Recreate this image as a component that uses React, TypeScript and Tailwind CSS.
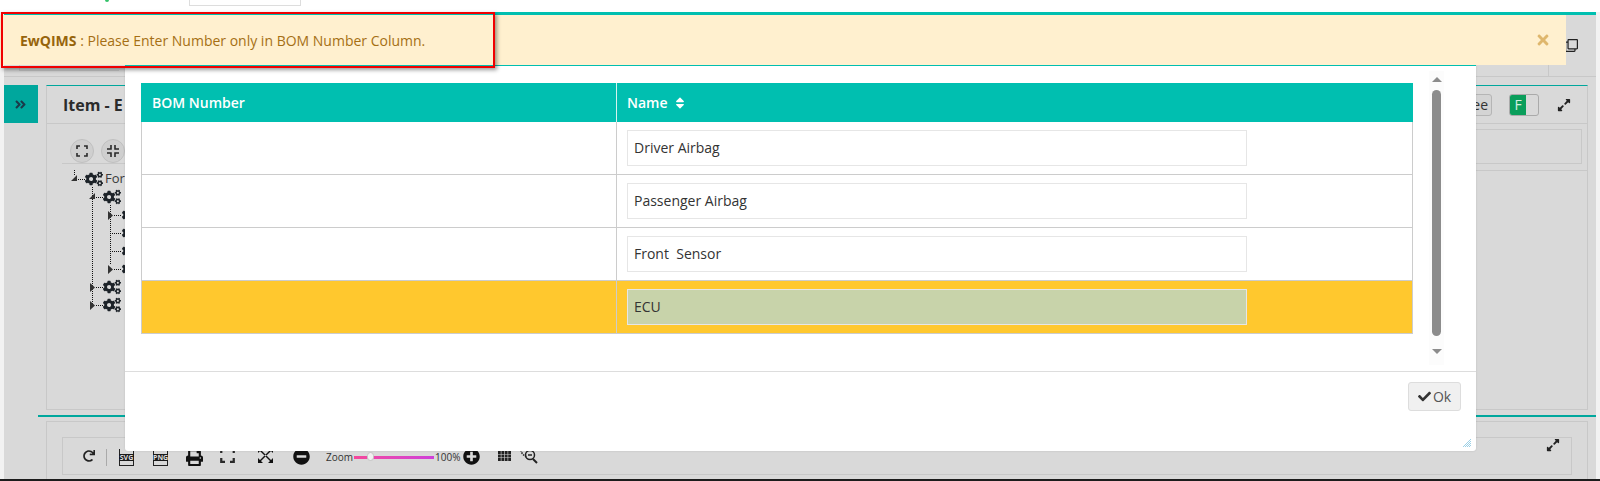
import { FaCheck, FaCogs, FaExpandAlt, FaPrint, FaSort, FaTimes, FaRedo, FaMinusCircle, FaPlusCircle, FaAngleDoubleRight, FaRegClone } from "react-icons/fa";

const rows = [
  { name: "Driver Airbag" },
  { name: "Passenger Airbag" },
  { name: "Front  Sensor" },
  { name: "ECU", active: true },
];

// tree rows: indent is the gear's left edge inside the tree box
const treeRows = [
  { indent: 85, label: "For" },
  { indent: 103 },
  { indent: 122 },
  { indent: 122 },
  { indent: 122 },
  { indent: 122 },
  { indent: 103 },
  { indent: 103 },
];

function CornerIcon({ size = 12, width = 1.6 }: { size?: number; width?: number }) {
  return (
    <svg width={size} height={size} viewBox="0 0 12 12" fill="none" stroke="#2a2a2a" strokeWidth={width}>
      <path d="M1 4V1h3M8 1h3v3M11 8v3H8M4 11H1V8" />
    </svg>
  );
}

function CollapseIcon() {
  return (
    <svg width="12" height="12" viewBox="0 0 12 12" fill="none" stroke="#2a2a2a" strokeWidth="1.6">
      <path d="M4 0v4H0M8 0v4h4M12 8H8v4M0 8h4v4" />
    </svg>
  );
}

function CrossArrows() {
  return (
    <svg width="15" height="15" viewBox="0 0 15 15" fill="#111" stroke="none">
      <path d="M2 1l12 12-1 1L1 2zM13 1L1 13l1 1L14 2z" />
      <path d="M0 0h5L0 5zM15 0v5l-5-5zM0 15v-5l5 5zM15 15h-5l5-5z" />
    </svg>
  );
}

function GridIcon() {
  return (
    <svg width="13" height="10" viewBox="0 0 13 10" fill="#222">
      {[0, 3.5, 7].map((y) =>
        [0, 3.4, 6.8, 10.2].map((x) => <rect key={`${x}-${y}`} x={x} y={y} width="2.8" height="3" />),
      )}
    </svg>
  );
}

function SearchLinkIcon() {
  return (
    <svg width="18" height="15" viewBox="0 0 18 15" fill="none" stroke="#222">
      <path d="M1 1c0 3 3 6 6 7" strokeWidth="1.5" strokeDasharray="1.500 1" />
      <circle cx="10" cy="6" r="4.500" strokeWidth="1.500" />
      <path d="M8 6h4" strokeWidth="1.500" />
      <path d="M13 10l4 4" strokeWidth="2" />
    </svg>
  );
}

function FileBadge({ label }: { label: string }) {
  return (
    <div className="flex h-[17px] w-[15px] shrink-0 flex-col items-center justify-center border border-t-0 border-[#222] pt-[2px]">
      <span className="w-[15px] rounded-[1px] bg-[#1a1a1a] text-center text-[7px] leading-[7px] font-bold text-[#ddd]">{label}</span>
    </div>
  );
}

function Tree() {
  return (
    <div className="relative h-[150px] text-[13px] text-[#3a3a3a]">
      {/* dotted connectors and the open/closed arrows */}
      <svg className="absolute top-0 left-0" width="124" height="150" fill="none" stroke="#111" strokeDasharray="1 1">
        <path d="M74.500 0v6M78 9.500h7M92.500 17v119M96 27.500h7M110.500 35v60M114 45.500h8M110 63.500h12M110 81.500h12M114 99.500h8M96 117.500h7M96 135.500h7" />
        <g fill="#333" stroke="none" strokeDasharray="none">
          <path d="M77 5v6h-6zM95 23v6h-6zM108 41l5 4.500-5 4.500zM108 95l5 4.500-5 4.500zM90 113l5 4.500-5 4.500zM90 131l5 4.500-5 4.500z" />
        </g>
      </svg>
      {treeRows.map((row, i) => (
        <div key={i} className="flex h-[18px] items-center" style={{ paddingLeft: row.indent }}>
          <FaCogs size={18} className="shrink-0 text-[#1c2228]" />
          {row.label && <span className="ml-[2px]">{row.label}</span>}
        </div>
      ))}
    </div>
  );
}

function Toolbar() {
  return (
    <div className="flex h-[38px] items-center border border-[#c8c8c8] pt-[2px] pl-[20px] text-[#111]">
      <FaRedo size={12} className="mt-[-2px] shrink-0 text-[#222]" />
      <div className="ml-[11px] h-[17px] w-px bg-[#aaa]" />
      <div className="ml-[12px]"><FileBadge label="SVG" /></div>
      <div className="ml-[19px]"><FileBadge label="PNG" /></div>
      <FaPrint size={17} className="ml-[18px] shrink-0" />
      <div className="mt-[-4px] ml-[17px]"><CornerIcon size={15} width={1.8} /></div>
      <div className="mt-[-3px] ml-[23px]"><CrossArrows /></div>
      <FaMinusCircle size={17} className="mt-[-2px] ml-[20px] shrink-0" />
      <span className="ml-[16px] w-[26px] text-[10px] text-[#333]">Zoom</span>
      <div className="relative ml-[2px] h-[3px] w-[80px] bg-linear-to-r from-[#f5479a] to-[#cf3fd9]">
        <div className="absolute top-[-4px] left-[13px] h-[9px] w-[7px] rounded-full border border-[#c4c4c4] bg-[#f0f0f0]" />
      </div>
      <span className="ml-[1px] w-[23px] text-[10px] text-[#333]">100%</span>
      <FaPlusCircle size={17} className="mt-[-2px] ml-[5px] shrink-0" />
      <div className="mt-[-2px] ml-[18px]"><GridIcon /></div>
      <div className="mt-[-2px] ml-[9px]"><SearchLinkIcon /></div>
      <FaExpandAlt size={14} className="mt-[-24px] mr-[11px] ml-auto shrink-0 text-[#222]" />
    </div>
  );
}

export default function App() {
  return (
    <div className="relative flex h-[481px] w-[1600px] flex-col overflow-hidden bg-[#f2f2f2] font-['Open_Sans',sans-serif]">
      {/* page behind the dialog */}
      <div className="flex h-[12px] bg-white">
        <div className="ml-[105px] h-[2px] w-[4px] rounded-b-full bg-[#34c26a]" />
        <div className="mt-[-4px] ml-[80px] h-[10px] w-[112px] border border-[#ddd]" />
      </div>
      <main className="mx-[4px] flex flex-1 flex-col border-t-[3px] border-[#00bfb0] bg-[#d9d9d9]">
        <div className="flex h-[62px] justify-between border-b border-[#c8c8c8]">
          <div className="ml-[15px] h-[56px] w-[100px] border-b border-l border-[#c8c8c8]" />
          <div className="flex w-[48px] justify-end border-l border-[#c8c8c8] pt-[24px] pr-[18px]">
            <FaRegClone size={13} className="text-[#222]" />
          </div>
        </div>
        <div className="mt-[8px] flex h-[325px]">
          <div className="flex h-[38px] w-[34px] items-center justify-center bg-[#00a79d] text-[#1a3a4a]">
            <FaAngleDoubleRight size={13} className="mr-[2px]" />
          </div>
          <section className="ml-[8px] w-[1542px] border border-[#c8c8c8] border-t-[#00a79d]">
            <div className="flex h-[38px] items-center border-b border-[#c8c8c8] pt-[1px] pr-[16px] pl-[16px]">
              <span className="text-[16px] font-bold text-[#2b2b2b]">Item - E</span>
              <span className="ml-auto rounded-[3px] border border-[#b5b5b5] bg-[#d4d4d4] px-[3px] text-[14px] leading-[20px] text-[#333]">Tree</span>
              <div className="ml-[17px] flex h-[22px] w-[30px] rounded-[3px] border border-[#aaa]">
                <span className="w-[16px] rounded-l-[2px] bg-[#0a9e5b] text-center text-[14px] leading-[20px] text-[#d8eee2]">F</span>
              </div>
              <FaExpandAlt size={14} className="ml-[18px] text-[#222]" />
            </div>
            <div className="mr-[5px] ml-[15px] flex h-[40px] items-end border-b border-[#c8c8c8] pl-[8px]">
              <div className="flex gap-[7px]">
                <div className="flex h-[24px] w-[24px] items-center justify-center rounded-full border border-[#c0c0c0] bg-[#cfcfcf]"><CornerIcon /></div>
                <div className="flex h-[24px] w-[24px] items-center justify-center rounded-full border border-[#c0c0c0] bg-[#cfcfcf]"><CollapseIcon /></div>
              </div>
              <div className="ml-[100px] h-[34px] flex-1 border-t border-r border-[#c8c8c8]" />
            </div>
            <div className="mt-[6px] ml-[200px] border-t border-[#c8c8c8]" />
            <div className="mt-[-1px] ml-[-47px]"><Tree /></div>
          </section>
        </div>
        <div className="mt-[5px] ml-[34px] h-[2px] bg-[#00a79d]" />
        <div className="mt-[4px] ml-[42px] w-[1542px] flex-1 border-x border-t border-[#c8c8c8] px-[15px] pt-[15px]">
          <Toolbar />
        </div>
      </main>
      <div className="h-[2px] bg-[#1c1c1c]" />

      {/* dialog */}
      <div className="absolute top-[65px] left-[125px] flex h-[386px] w-[1351px] flex-col rounded-b-[3px] border-t border-[#00bfb0] bg-white shadow-[0_0_2px_rgba(0,0,0,0.15)]">
        <div className="flex h-[306px] border-b border-[#ddd] pl-[16px]">
          <div className="mt-[17px] h-[250px] w-[1272px] text-[14px] text-[#333]">
            <div className="flex h-[39px] items-center bg-[#00bfb0] font-semibold text-white">
              <div className="flex h-full w-[476px] items-center border-r border-[#d5f2ef] pl-[11px]">BOM Number</div>
              <div className="flex items-center pl-[10px]">
                Name
                <FaSort size={14} className="ml-[5px]" />
              </div>
            </div>
            {rows.map((row) => (
              <div
                key={row.name}
                className={`flex h-[53px] items-center border-x border-b border-[#ccc] ${row.active ? "bg-[#ffc82e]" : "bg-white"}`}
              >
                <div className="h-full w-[475px] border-r border-[#ccc]" />
                <div className="pl-[10px]">
                  <div
                    className={`flex h-[36px] w-[620px] items-center border border-[#e6e6e6] pb-[2px] pl-[6px] whitespace-pre ${row.active ? "bg-[#c8d3aa]" : "bg-white"}`}
                  >
                    {row.name}
                  </div>
                </div>
              </div>
            ))}
          </div>
          <div className="mt-[5px] ml-[16px] flex h-[294px] w-[15px] flex-col items-center bg-[#fcfcfc]">
            <div className="mt-[6px] h-0 w-0 border-x-[5px] border-b-[5px] border-x-transparent border-b-[#8c8c8c]" />
            <div className="mt-[8px] h-[246px] w-[9px] rounded-full bg-[#8c8c8c]" />
            <div className="mt-[13px] h-0 w-0 border-x-[5px] border-t-[5px] border-x-transparent border-t-[#8c8c8c]" />
          </div>
        </div>
        <div className="flex justify-end pt-[10px] pr-[15px]">
          <button className="flex h-[29px] w-[53px] items-center justify-center gap-[2px] rounded-[3px] border border-[#ddd] bg-[#f0f0f0] text-[14px] text-[#555]">
            <FaCheck size={13} className="text-[#333]" />
            Ok
          </button>
        </div>
        <svg className="absolute right-[5px] bottom-[4px]" width="8" height="8" stroke="#9cd0e6" strokeWidth="1">
          <path d="M0 8L8 0M2 8l6-6M4 8l4-4M6 8l2-2" />
        </svg>
      </div>

      {/* alert bar, with the red box drawn over it */}
      <div className="absolute top-[15px] left-0 flex h-[50px] w-[1566px] items-center bg-[#fff0cf] pr-[15px] pl-[20px] text-[14px] text-[#a56f14]">
        <b className="font-bold text-[#96640c]">EwQIMS</b>
        <span className="whitespace-pre"> : Please Enter Number only in BOM Number Column.</span>
        <FaTimes size={16} className="ml-auto text-[#dfb76d]" />
      </div>
      <div className="absolute top-[12px] left-[1px] h-[56px] w-[494px] border-2 border-[#f00000] shadow-[2px_2px_4px_rgba(0,0,0,0.4)]" />
    </div>
  );
}
